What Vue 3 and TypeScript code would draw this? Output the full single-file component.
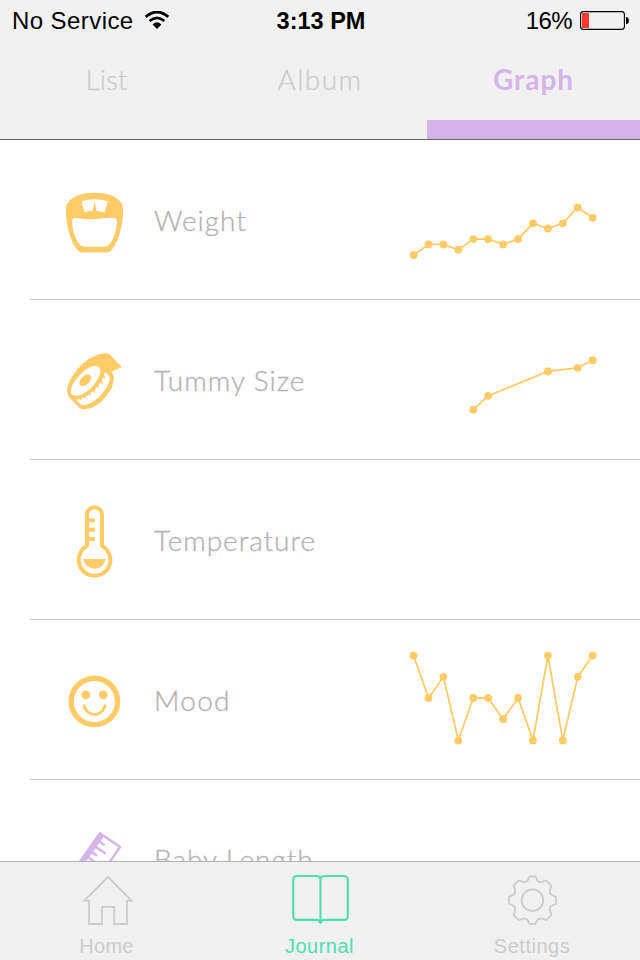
<script setup lang="ts">
interface Row {
  key: string
  label: string
  points: [number, number][]
}

const STEP = 14.92
const FIRST = 13.6

const rows: Row[] = [
  {
    key: 'weight',
    label: 'Weight',
    points: [[0, 115], [1, 104.4], [2, 104.4], [3, 109.7], [4, 99.1], [5, 99.1], [6, 104.4], [7, 99.1], [8, 83.3], [9, 88.5], [10, 83.3], [11, 67.5], [12, 77.8]],
  },
  {
    key: 'tummy',
    label: 'Tummy Size',
    points: [[4, 109.7], [5, 95.8], [9, 71.3], [11, 67.8], [12, 60.2]],
  },
  { key: 'temperature', label: 'Temperature', points: [] },
  {
    key: 'mood',
    label: 'Mood',
    points: [[0, 35.6], [1, 78], [2, 56.8], [3, 120.4], [4, 78], [5, 78], [6, 99.2], [7, 78], [8, 120.4], [9, 35.6], [10, 120.4], [11, 56.8], [12, 35.6]],
  },
  { key: 'length', label: 'Baby Length', points: [] },
]

const px = (i: number): number => FIRST + i * STEP
const line = (row: Row): string => row.points.map(([i, y]) => `${px(i)},${y}`).join(' ')
</script>

<template>
  <div class="screen">
    <header class="header">
      <div class="status">
        <div class="carrier">
          <span class="service">No Service</span>
          <svg class="wifi" width="26" height="20" viewBox="0 0 26 20">
            <path d="M1.7 5.9Q13-3.9 24.3 5.9" fill="none" stroke="#000" stroke-width="2.8" />
            <path d="M5.6 10Q13 3.6 20.4 10" fill="none" stroke="#000" stroke-width="2.6" />
            <path d="M8.6 13.4Q13 9.2 17.4 13.4L13 18Z" fill="#000" />
          </svg>
        </div>
        <span class="clock">3:13 PM</span>
        <div class="power">
          <span class="percent">16%</span>
          <svg width="50" height="20" viewBox="0 0 50 20">
            <rect x="0.6" y="0.6" width="43.8" height="17.8" rx="2.8" fill="none" stroke="#000" stroke-width="1.1" />
            <rect x="2" y="2" width="7" height="15" rx="0.6" fill="#ff3b30" />
            <path d="M46 6H47Q49 7 49 9.5T47 13H46Z" fill="#000" />
          </svg>
        </div>
      </div>
      <nav class="tabs">
        <div class="tab list"><span>List</span></div>
        <div class="tab album"><span>Album</span></div>
        <div class="tab graph active"><span>Graph</span></div>
      </nav>
    </header>

    <main class="rows">
      <section v-for="row in rows" :key="row.key" class="row">
        <svg class="icon" :class="row.key" width="80" height="80" viewBox="0 0 80 80">
          <g v-if="row.key === 'weight'">
            <path class="fill" fill-rule="evenodd" d="M39.5 12.8C50 12.8 59 15.4 63.6 19.8C67 23 68.2 26 68.1 31C68 46 63.5 61 57.5 68.7C55 71.8 53.5 72.5 50 72.5H29C25.5 72.5 24 71.8 21.5 68.7C15.5 61 11 46 10.9 31C10.8 26 12 23 15.4 19.8C20 15.4 29 12.8 39.5 12.8ZM26.6 21.3L29.4 32.2Q34 31 39.5 31T49.8 32.2L52.6 21.3Q46 19.3 39.5 19.3T26.6 21.3ZM20 37.8Q16.8 38.3 17.1 42C17.5 50 19.8 58 23.8 63.5Q26.8 66.8 31 66.8H48Q52.2 66.8 55.2 63.5C59.2 58 61.5 50 61.9 42Q62.2 38.3 59 37.8Q49 38.2 39.5 39T20 37.8Z" />
            <path class="fill" d="M39.5 21L41.6 32H37.4Z" />
          </g>
          <g v-else-if="row.key === 'tummy'">
            <path class="fill" d="M32.5 20C40 15 48 12.7 52.5 13.5Q55.5 14 57.5 17.2L66.8 27L56.3 32Q59.5 35.5 58.9 39.5C58 49 50 60 41 65.5Q36 68.7 29 69.5Q26 69.5 24.3 67.8L14.7 58Q11.5 53 12.3 48.5C14 39 23 26.5 32.5 20Z" />
            <path class="paper" d="M32.7 28.4C37.5 25.5 42 25.1 44.5 27.7C48 33 40 45.5 32 51.5C25 56.3 18.5 57 16.2 53.5C13.5 48 23 34.5 32.7 28.4Z" />
            <path class="paper" d="M21 59.5Q23 59.6 25 59L26.5 60.5L27 58.2L29.3 57.2L31 59.2L31 56.2L33.5 54.5L35.3 56.8L35.3 53.2L38 51L40.3 54L39.9 49.2L42.2 46.8L44 48.8L43.6 45L45.5 42.6L48.2 44.5L46.9 40.2L48.2 37.5L50.5 38.5L49.2 35L50 31.5L54.7 36.8C55.3 45 46 57 38 61.7Q33 64.8 28.2 65.2Q25.5 65.2 21 59.5Z" />
            <ellipse class="fill" cx="30.2" cy="40.3" rx="7.1" ry="4.3" transform="rotate(-45 30.2 40.3)" />
          </g>
          <g v-else-if="row.key === 'temperature'">
            <path class="stroke t4" d="M32 46V14.7A7.5 7.5 0 0 1 47 14.7V46A15.8 15.8 0 1 1 32 46Z" />
            <path class="stroke t4" d="M33 20.2H39.8M33 29.7H39.8M33 39H39.8" />
            <path class="fill" d="M28.4 59H50.6A11.2 11.2 0 0 1 28.4 59Z" />
          </g>
          <g v-else-if="row.key === 'mood'">
            <circle class="stroke t5" cx="39.4" cy="41.4" r="23.2" />
            <circle class="fill" cx="30.8" cy="34.8" r="4.4" />
            <circle class="fill" cx="48.3" cy="34.8" r="4.4" />
            <path class="stroke t3" d="M28.8 44.5C31 57.8 48 57.8 50.2 44.5" />
          </g>
          <g v-else>
            <path class="stroke t25" d="M45 13.2L65 27L33 73L13 59Z" />
            <path class="fill" d="M44.5 12L49.5 15.5L18 60.5L13 57Z" />
            <path class="stroke t25 round" d="M43.5 21L48.8 24.7M39.8 26.3L49.8 33M36 31.5L41.3 35.2M32.4 36.7L42.4 43.7" />
          </g>
        </svg>
        <span class="label" :class="row.key">{{ row.label }}</span>
        <svg v-if="row.points.length" class="chart" width="210" height="160" viewBox="0 0 210 160">
          <polyline :points="line(row)" />
          <circle v-for="[i, y] in row.points" :key="i" :cx="px(i)" :cy="y" r="3.9" />
        </svg>
      </section>
    </main>

    <footer class="tabbar">
      <div class="item home">
        <svg width="60" height="56" viewBox="0 0 60 56">
          <path d="M31 6.8L54.5 30.6H50V54H37.2V36.8H25V54H12V30.6H7.3Z" />
        </svg>
        <span>Home</span>
      </div>
      <div class="item journal">
        <svg width="60" height="56" viewBox="0 0 60 56">
          <path d="M30.5 9.2Q30 6 26.5 6H7.5Q3.2 6 3.2 10.2V45.7Q3.2 49.9 7.5 49.9H26.5Q30 49.9 30.5 53.5Q31 49.9 34.5 49.9H53.5Q57.8 49.9 57.8 45.7V10.2Q57.8 6 53.5 6H34.5Q31 6 30.5 9.2V53.5" />
        </svg>
        <span>Journal</span>
      </div>
      <div class="item settings">
        <svg width="60" height="56" viewBox="0 0.3 60 56">
          <path d="M27.5 6.8H33.5L35.5 11.2Q37.5 12.6 40 12.2L44.4 10.8L49.4 15.8L48 20.2Q47.4 22.8 48.8 24.7L54 27.3V34L48.8 36.5Q47.4 38.5 48 41L49.4 45.4L44.4 50.4L40 49Q37.5 48.6 35.5 50L33.5 54.2H27.5L25.5 50Q23.5 48.6 21 49L16.6 50.4L11.6 45.4L13 41Q13.6 38.5 12.2 36.5L7 34V27.3L12.2 24.7Q13.6 22.8 13 20.2L11.6 15.8L16.6 10.8L21 12.2Q23.5 12.6 25.5 11.2Z" />
          <circle cx="30.5" cy="30.5" r="10.8" />
        </svg>
        <span>Settings</span>
      </div>
    </footer>
  </div>
</template>

<style>
body {
  margin: 0;
  background: #fff;
}
</style>

<style scoped>
.screen {
  width: 640px;
  height: 960px;
  display: flex;
  flex-direction: column;
  overflow: hidden;
  background: #fff;
}
.header {
  box-sizing: border-box;
  height: 140px;
  flex: none;
  display: flex;
  flex-direction: column;
  background: #f1f1f1;
  border-bottom: 1px solid #666;
}
.status {
  box-sizing: border-box;
  height: 40px;
  display: grid;
  grid-template-columns: 1fr auto 1fr;
  align-items: center;
  padding: 2px 10px 0 12px;
  font: 24px/38px "Liberation Sans", Arial, sans-serif;
  color: #000;
}
.carrier,
.power {
  display: flex;
  align-items: center;
}
.carrier {
  gap: 10px;
}
.service {
  letter-spacing: 0.42px;
}
.power {
  justify-content: flex-end;
  gap: 8px;
}
.percent {
  letter-spacing: -0.6px;
}
.clock {
  font-weight: 700;
  font-size: 23.5px;
}
.tabs {
  flex: 1;
  display: grid;
  grid-template-columns: 213px 214px 213px;
}
.tab {
  box-sizing: border-box;
  text-align: center;
  font: 300 28px/78px Lato, sans-serif;
  color: #ccc;
  border-bottom: 19px solid transparent;
  height: 99px;
  -webkit-text-stroke: 0.3px currentColor;
}
.tab.album {
  letter-spacing: 1.4px;
}
.tab.active {
  font-weight: 700;
  letter-spacing: 0.9px;
  color: #d6b3e8;
  border-bottom-color: #d6b3e8;
  -webkit-text-stroke-width: 0;
}
.rows {
  flex: 1;
  min-height: 0;
  overflow: hidden;
}
.row {
  box-sizing: border-box;
  height: 160px;
  margin-left: 30px;
  padding: 0 30px 0 25px;
  display: flex;
  align-items: center;
  border-bottom: 1px solid #c8c8c8;
}
.icon {
  flex: none;
  color: #ffcb66;
}
.icon.length {
  color: #d6b3e8;
}
.fill {
  fill: currentColor;
}
.paper {
  fill: #fff;
}
.stroke {
  fill: none;
  stroke: currentColor;
  stroke-linejoin: round;
}
.t25 { stroke-width: 2.3; }
.round { stroke-linecap: round; }
.t3 { stroke-width: 2.8; }
.t4 { stroke-width: 4; }
.t5 { stroke-width: 5.4; }
.label {
  margin-left: 19px;
  white-space: nowrap;
  font: 300 28px/40px Lato, sans-serif;
  letter-spacing: 0.95px;
  color: #b2b2b2;
  -webkit-text-stroke: 0.3px currentColor;
}
.label.mood {
  letter-spacing: 1.3px;
}
.label.length {
  padding-bottom: 2px;
}
.chart {
  flex: none;
  margin-left: auto;
}
.chart polyline {
  fill: none;
  stroke: #ffcb66;
  stroke-width: 1.8;
}
.chart circle {
  fill: #ffcb66;
}
.tabbar {
  box-sizing: border-box;
  height: 99px;
  flex: none;
  display: grid;
  grid-template-columns: 213px 213px 214px;
  background: #f1f1f1;
  border-top: 1px solid #b2b2b2;
}
.item {
  display: flex;
  flex-direction: column;
  align-items: center;
  padding-top: 8px;
  color: #ccc;
  font: 20px/40px "Liberation Sans", Arial, sans-serif;
  letter-spacing: 0.5px;
}
.item.home {
  letter-spacing: 0.3px;
}
.item.settings {
  padding-right: 2px;
}
.item svg {
  fill: none;
  stroke: currentColor;
  stroke-width: 1.8;
  overflow: visible;
}
.item.journal {
  color: #4be0ae;
}
.item.journal svg {
  stroke-width: 2.1;
}
</style>
